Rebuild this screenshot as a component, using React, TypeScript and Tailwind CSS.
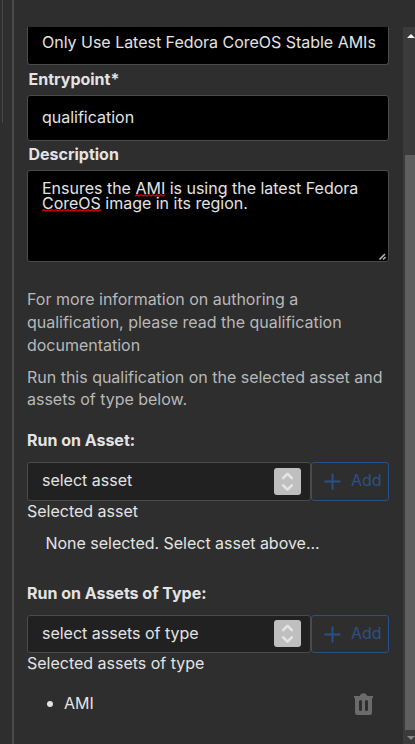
import type { ReactNode } from "react";

function Label({ children, className = "" }: { children: ReactNode; className?: string }) {
  return <div className={`h-5 leading-5 font-bold whitespace-nowrap ${className}`}>{children}</div>;
}

function Misspelled({ children }: { children: ReactNode }) {
  return (
    <span className="relative inline-block">
      {children}
      <svg className="absolute left-0 bottom-[-1px] h-[3px] w-full" aria-hidden="true">
        <defs>
          <pattern id="squiggle" width="4" height="3" patternUnits="userSpaceOnUse">
            <path d="M0 2.2 L2 0.6 L4 2.2" fill="none" stroke="#f00000" strokeWidth="1.1" />
          </pattern>
        </defs>
        <rect width="100%" height="3" fill="url(#squiggle)" />
      </svg>
    </span>
  );
}

function SelectRow({ text, height }: { text: string; height: string }) {
  return (
    <div className={`flex w-[362px] ${height}`}>
      <div className="flex w-[284px] items-center justify-between rounded-[3px] border border-[#4b4b4b] bg-[#212121] pl-[14px] pr-[9px]">
        <span className="pb-[2px] whitespace-nowrap">{text}</span>
        <span className="flex size-[27px] items-center justify-center rounded-[3px] bg-[#bfbfbf]">
          <svg width="27" height="27" viewBox="0 0 27 27" fill="none" stroke="#e4e4e4" strokeWidth="2.6" strokeLinecap="round" strokeLinejoin="round">
            <path d="M9.2 10 L13.5 5.8 L17.8 10 M9.2 17.4 L13.5 21.6 L17.8 17.4" />
          </svg>
        </span>
      </div>
      <button className="flex flex-1 items-center rounded-[3px] border border-[#28508a] pl-[12px] text-[#2a5188]">
        <svg width="17" height="18" viewBox="0 0 17 18" fill="none" stroke="currentColor" strokeWidth="1.8" strokeLinecap="round">
          <path d="M1.2 9.5 H15.8 M8.5 2.2 V16.8" />
        </svg>
        <span className="ml-[10px] pb-[2px]">Add</span>
      </button>
    </div>
  );
}

export default function App() {
  return (
    <div className="flex h-[744px] w-[415px] overflow-hidden bg-[#2e2e2e] font-['Inter',sans-serif] text-[16px] leading-5 tracking-[-0.01px] text-[#e3e3e3]">
      <div className="h-[123px] w-[3px] border-r border-[#474747]" />
      <div className="ml-[9px] w-[2px] bg-[#4b4b4b]" />
      <main className="ml-[13px] mt-[27px] flex w-[376px] flex-col">
        <div className="flex h-[38px] w-[362px] items-center whitespace-nowrap rounded-b-[3px] border border-t-0 border-[#4b4b4b] bg-black pb-[8px] pl-[14px] tracking-[-0.02px]">
          Only Use Latest Fedora CoreOS Stable AMIs
        </div>
        <Label className="mt-[4px] pl-[1.5px]">Entrypoint*</Label>
        <div className="mt-[6px] flex h-[46px] w-[362px] items-center rounded-[3px] border border-[#4b4b4b] bg-black pb-[2px] pl-[14px]">
          qualification
        </div>
        <Label className="mt-[3px] pl-[1.5px]">Description</Label>
        <div className="relative mt-[6px] h-[92px] w-[362px] rounded-[3px] border border-[#4b4b4b] bg-black pl-[14px] pt-[10px] leading-[15px] whitespace-nowrap">
          Ensures the <Misspelled>AMI</Misspelled> is using the latest Fedora
          <br />
          <Misspelled>CoreOS</Misspelled> image in its region.
          <svg className="absolute bottom-[1px] right-[2px]" width="7" height="7" viewBox="0 0 7 7" stroke="#b0b0b0" strokeWidth="1.6">
            <path d="M0.5 6.5 L6 1 M4 6.5 L6.5 4" />
          </svg>
        </div>
        <p className="mt-[26px] leading-[22.75px] whitespace-nowrap text-[#b8b8b8]">
          For more information on authoring a<br />
          qualification, please read the qualification<br />
          documentation
        </p>
        <p className="mt-[9.75px] leading-[22px] whitespace-nowrap text-[#b8b8b8]">
          Run this qualification on the selected asset and<br />
          assets of type below.
        </p>
        <Label className="mt-[19.75px]">Run on Asset:</Label>
        <div className="mt-[12px]">
          <SelectRow text="select asset" height="h-[39px]" />
        </div>
        <div>Selected asset</div>
        <div className="mt-[12px] pl-[18.5px] tracking-[-0.02px]">None selected. Select asset above...</div>
        <Label className="mt-[30px]">Run on Assets of Type:</Label>
        <div className="mt-[12px]">
          <SelectRow text="select assets of type" height="h-[38px]" />
        </div>
        <div>Selected assets of type</div>
        <div className="mt-[20px] flex h-[22px] w-[362px] items-center">
          <span className="ml-[20px] size-[6px] rounded-full bg-[#e3e3e3]" />
          <span className="ml-[11px] pb-[2px]">AMI</span>
          <svg className="ml-auto mr-[16px]" width="19" height="22" viewBox="0 0 19 22">
            <path
              fill="#6b6b6b"
              fillRule="evenodd"
              d="M0 3 H5.5 L7 1 Q9.5 -0.5 12 1 L13.5 3 H19 V5 H18 V19.5 Q18 22 15.5 22 H3.5 Q1 22 1 19.5 V5 H0 Z M6.5 7 Q5 7 5 8.5 V16.5 Q5 18 6.5 18 Q8 18 8 16.5 V8.5 Q8 7 6.5 7 Z M12.5 7 Q11 7 11 8.5 V16.5 Q11 18 12.5 18 Q14 18 14 16.5 V8.5 Q14 7 12.5 7 Z"
            />
          </svg>
        </div>
      </main>
      <aside className="mt-[27px] flex w-[12px] flex-col items-end bg-[#3b3b3b] pl-[2px]">
        <svg className="mt-[7px] -mr-[1px]" width="10" height="4" viewBox="0 0 10 4">
          <path fill="#f0f0f0" d="M1 4 L5 0 L9 4 Z" />
        </svg>
        <div className="mt-[117px] h-[575px] w-[10px] bg-[#5f5f5f]" />
        <svg className="mt-[6px] -mr-[1px]" width="10" height="4" viewBox="0 0 10 4">
          <path fill="#858585" d="M1 0 H9 L5 4 Z" />
        </svg>
      </aside>
    </div>
  );
}
